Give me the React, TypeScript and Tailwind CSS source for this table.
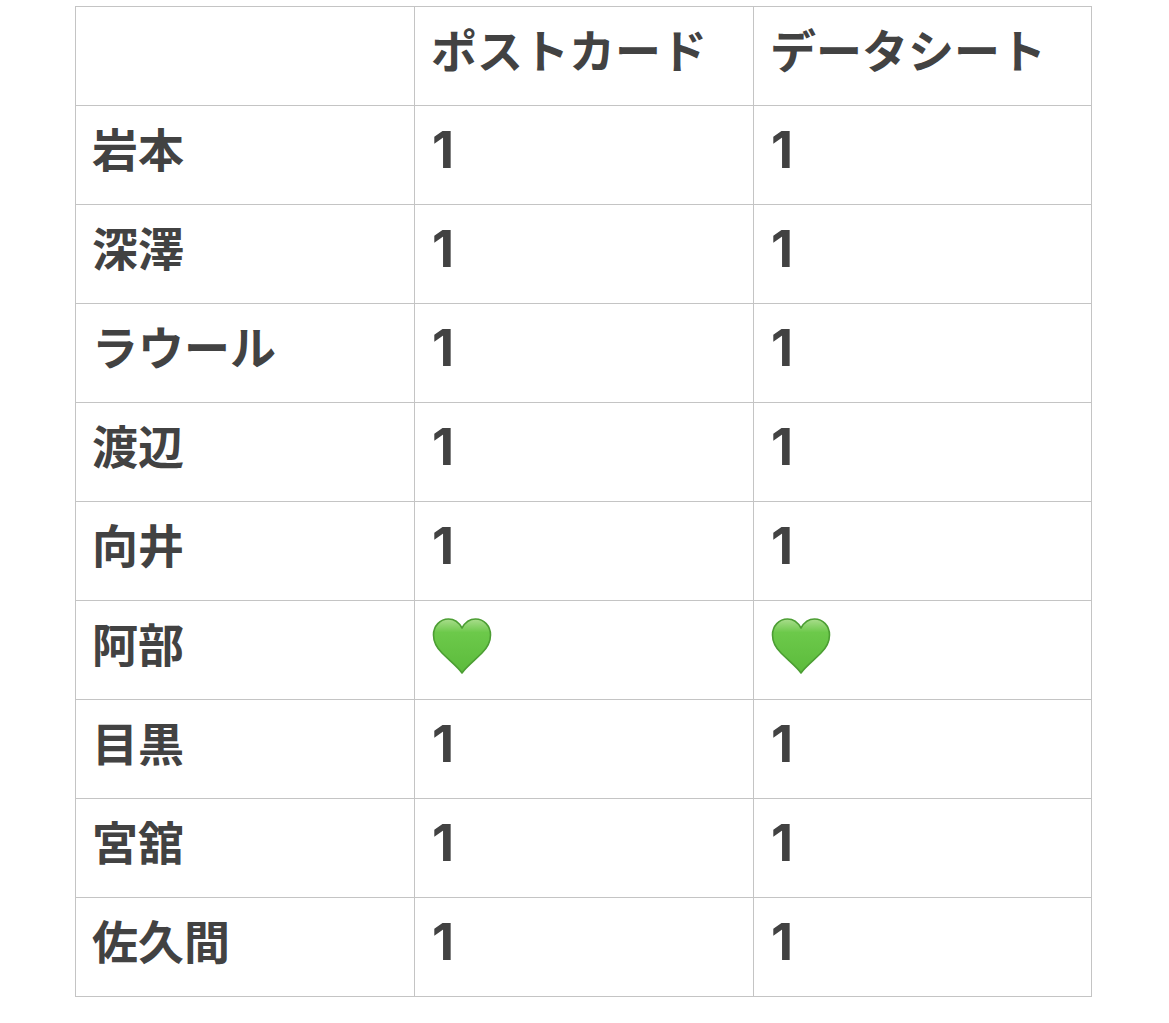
import React from "react";

const Heart = () => (
  <svg width="60" height="58" viewBox="0 0 60 58" className="ml-[1px] mt-[8px]">
    <defs>
      <linearGradient id="hg" x1="0" y1="0" x2="0" y2="1">
        <stop offset="0" stopColor="#a9dd8c" />
        <stop offset="0.25" stopColor="#6cc94a" />
        <stop offset="1" stopColor="#5cbb3c" />
      </linearGradient>
    </defs>
    <path
      d="M30 56 C26 50 18 44 10 36 C4 30 1.5 25 1.5 18 C1.5 9 8 2 16.5 2 C22.5 2 27 5.5 30 11 C33 5.5 37.5 2 43.5 2 C52 2 58.5 9 58.5 18 C58.5 25 56 30 50 36 C42 44 34 50 30 56 Z"
      fill="url(#hg)"
      stroke="#4c9e33"
      strokeWidth="1.6"
      strokeLinejoin="round"
    />
  </svg>
);

const rows: [string, string, string][] = [
  ["岩本", "1", "1"],
  ["深澤", "1", "1"],
  ["ラウール", "1", "1"],
  ["渡辺", "1", "1"],
  ["向井", "1", "1"],
  ["阿部", "heart", "heart"],
  ["目黒", "1", "1"],
  ["宮舘", "1", "1"],
  ["佐久間", "1", "1"],
];

const Cell = ({ children }: { children?: React.ReactNode }) => (
  <div className="h-[99px] border-r border-b border-[#c4c4c4] flex items-center pl-[16px] pb-[16px]">
    {children}
  </div>
);

const Num = ({ v }: { v: string }) =>
  v === "heart" ? (
    <Heart />
  ) : (
    <span
      className="text-[51px] font-bold pl-[1px] pt-[4px]"
      style={{ fontFamily: 'Inter, "Liberation Sans", sans-serif' }}
    >
      {v}
    </span>
  );

export default function App() {
  return (
    <div
      className="w-[1169px] h-[1023px] bg-white pt-[6px] pl-[75px] text-[#424242] font-bold text-[46px] leading-none"
      style={{ fontFamily: '"Noto Sans CJK JP", "Noto Sans", sans-serif' }}
    >
      <div className="grid grid-cols-[339px_339px_338px] w-[1017px] border-l border-t border-[#c4c4c4]">
        <Cell />
        <Cell>
          <span>ポストカード</span>
        </Cell>
        <Cell>
          <span>データシート</span>
        </Cell>
        {rows.map((r, i) => (
          <React.Fragment key={i}>
            <Cell>{r[0]}</Cell>
            <Cell>
              <Num v={r[1]} />
            </Cell>
            <Cell>
              <Num v={r[2]} />
            </Cell>
          </React.Fragment>
        ))}
      </div>
    </div>
  );
}
